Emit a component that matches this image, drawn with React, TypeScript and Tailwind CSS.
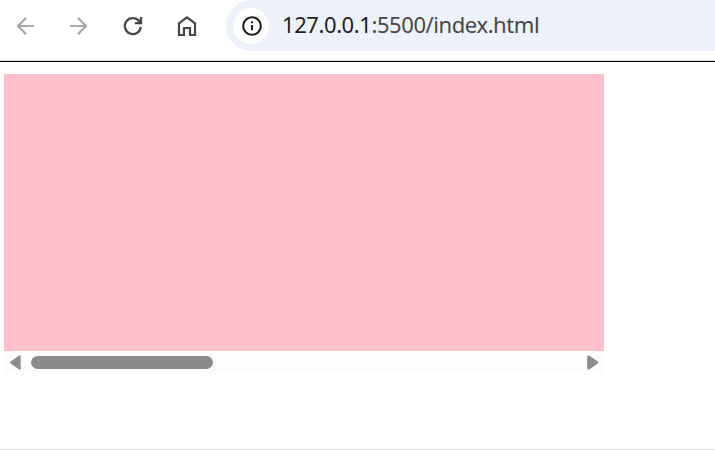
import React from "react";

const iconBox = "block h-6 w-6 shrink-0";

function BackIcon() {
  return (
    <svg className={iconBox} viewBox="0 0 24 24" fill="none" stroke="#a6a8ab" strokeWidth="2.2">
      <path d="M21 12H5M13 3.9 4.9 12l8.1 8.1" />
    </svg>
  );
}

function ForwardIcon() {
  return (
    <svg className={iconBox} viewBox="0 0 24 24" fill="none" stroke="#a6a8ab" strokeWidth="2.2">
      <path d="M3 12h16M11 3.9l8.1 8.1-8.1 8.1" />
    </svg>
  );
}

function ReloadIcon() {
  return (
    <svg className={iconBox} viewBox="0 0 24 24" fill="none" stroke="#474747" strokeWidth="2.3">
      <path d="M19.8 13A8 8 0 1 1 17.9 6.8L19.5 8.8" />
      <path d="M20 3v6.1h-6.1" />
      <path d="M19.5 5v3.6h-3.6Z" fill="#474747" stroke="none" />
    </svg>
  );
}

function HomeIcon() {
  return (
    <svg className={iconBox} viewBox="0 0 24 24" fill="none" stroke="#474747" strokeWidth="2.2">
      <path d="M4 21V9.4l8-6.1 8 6.1V21h-5v-7H9v7Z" />
    </svg>
  );
}

function InfoIcon() {
  return (
    <svg className="block h-6 w-6" viewBox="0 0 24 24" fill="none" stroke="#1f1f1f" strokeWidth="2.1">
      <circle cx="12" cy="12" r="8.8" />
      <path d="M12 11v5.2M12 7.3v2" />
    </svg>
  );
}

function Toolbar() {
  return (
    <header className="flex h-[62px] items-start border-b border-black">
      <div className="flex h-[60px] w-full items-start shadow-[0_1px_0_#d8d8d8]">
        <nav className="flex h-[52px] w-[226px] shrink-0 items-center gap-[30px] pl-[13px]">
          <BackIcon />
          <ForwardIcon />
          <ReloadIcon />
          <HomeIcon />
        </nav>
        <div className="flex h-[51px] flex-1 items-center rounded-l-full bg-[#ecf1fa] pl-[7px]">
          <span className="flex h-9 w-9 shrink-0 items-center justify-center rounded-full bg-white pl-px">
            <InfoIcon />
          </span>
          <span className="mb-[3px] ml-[13px] whitespace-nowrap font-['Noto_Sans',sans-serif] text-[22px] leading-8 tracking-[-0.42px] text-[#474747]">
            <span className="text-[#1f1f1f]">127.0.0.1</span>:5500/index.html
          </span>
        </div>
      </div>
    </header>
  );
}

function ScrollBar() {
  return (
    <div className="flex h-[23px] items-center bg-[#fcfcfc] pl-1.5 pr-[5px]">
      <svg className="h-[15px] w-[11px] shrink-0" viewBox="0 0 11 15" fill="#8b8b8b">
        <path d="M10.7 1.5v12q0 1.4-1.4.9L1 8.8Q-.6 7.5 1 6.2L9.3.6q1.4-.5 1.4.9Z" />
      </svg>
      <div className="mx-2.5 flex-1">
        <div className="h-[13px] w-[182px] rounded-full bg-[#8b8b8b]" />
      </div>
      <svg className="h-[15px] w-3 shrink-0" viewBox="0 0 12 15" fill="#8b8b8b">
        <path d="M.2 1.5v12q0 1.4 1.8.9l8.5-5.6q1.4-1.3 0-2.6L2 .6Q.2.1.2 1.5Z" />
      </svg>
    </div>
  );
}

export default function App() {
  return (
    <div className="flex h-[450px] w-[715px] flex-col overflow-hidden border-b border-[#dedede] bg-white">
      <Toolbar />
      <main className="ml-1 mt-3 w-[600px]">
        <div className="h-[277px] bg-[#ffc0cb]" />
        <ScrollBar />
      </main>
    </div>
  );
}
